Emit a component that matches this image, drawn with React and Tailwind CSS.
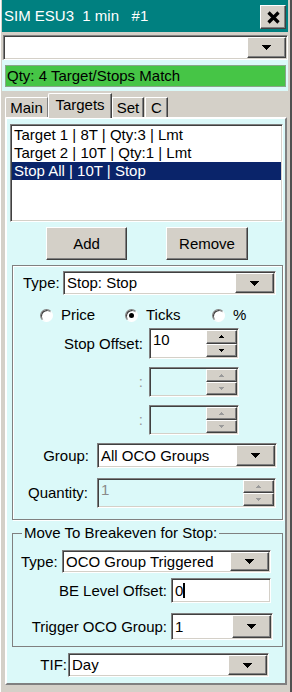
import React from 'react';

const raised =
  'bg-[#d4d0c8] border border-t-white border-l-white border-r-[#404040] border-b-[#404040] shadow-[inset_-1px_-1px_0_#808080]';
const sunken =
  'border border-t-[#808080] border-l-[#808080] border-r-white border-b-white shadow-[inset_1px_1px_0_#404040,inset_-1px_-1px_0_#d4d0c8]';

function DownArrow() {
  return (
    <svg width="9" height="5" shapeRendering="crispEdges">
      <path d="M0 0h9v1h-1v1h-1v1h-1v1h-1v1h-1v-1h-1v-1h-1v-1h-1v-1h-1z" fill="#000" />
    </svg>
  );
}

function SmallUp({ color = '#000' }) {
  return (
    <svg width="5" height="3" shapeRendering="crispEdges">
      <path d="M2 0h1v1h1v1h1v1h-5v-1h1v-1h1z" fill={color} />
    </svg>
  );
}

function SmallDown({ color = '#000' }) {
  return (
    <svg width="5" height="3" shapeRendering="crispEdges">
      <path d="M0 0h5v1h-1v1h-1v1h-1v-1h-1v-1h-1z" fill={color} />
    </svg>
  );
}

function Combo({ value, className = '' }) {
  return (
    <div className={`${sunken} bg-white flex p-[1px] ${className}`}>
      <div className="flex-1 flex items-center pl-[2px] whitespace-nowrap overflow-hidden">{value}</div>
      <div className={`${raised} w-[39px] flex items-center justify-center`}>
        <DownArrow />
      </div>
    </div>
  );
}

function Spin({ value, disabled, className = '' }) {
  const arrow = disabled ? '#9a9a9a' : '#000';
  return (
    <div className={`${sunken} ${disabled ? 'bg-[#dbf9f9]' : 'bg-white'} flex p-[1px] ${className}`}>
      <div className={`flex-1 pl-[2px] pt-[1px] ${disabled ? 'text-[#8a8a8a]' : ''}`}>{value}</div>
      <div className="w-[31px] flex flex-col">
        <div className={`${raised} flex-1 flex items-center justify-center`}>
          <SmallUp color={arrow} />
        </div>
        <div className={`${raised} flex-1 flex items-center justify-center`}>
          <SmallDown color={arrow} />
        </div>
      </div>
    </div>
  );
}

function Radio({ label, checked, className = '' }) {
  return (
    <div className={`flex items-center gap-[8px] ${className}`}>
      <div className="w-[13px] h-[13px] rounded-full bg-white border border-t-[#808080] border-l-[#808080] border-r-white border-b-white shadow-[inset_1px_1px_0_#404040] flex items-center justify-center">
        {checked && <div className="w-[5px] h-[5px] rounded-full bg-black" />}
      </div>
      <span>{label}</span>
    </div>
  );
}

function Row({ label, labelClass, children, className = '' }) {
  return (
    <div className={`flex items-center ${className}`}>
      <div className={`whitespace-nowrap ${labelClass}`}>{label}</div>
      {children}
    </div>
  );
}

export default function App() {
  const items = [
    'Target 1 | 8T | Qty:3 | Lmt',
    'Target 2 | 10T | Qty:1 | Lmt',
    'Stop All | 10T | Stop',
  ];

  return (
    <div className="w-[292px] h-[692px] flex flex-col bg-[#d4d0c8] pl-[2px] pr-[2px] border-r-2 border-r-[#505050] shadow-[inset_1px_0_0_#ffffff] font-['Liberation_Sans',Arial,sans-serif] text-[15px] leading-[18px] text-black">
      {/* title bar */}
      <div className="h-[32px] bg-[#008080] flex items-center justify-between pl-[2px] pr-[2px]">
        <span className="text-white whitespace-pre">SIM ESU3  1 min   #1</span>
        <div className={`${raised} w-[26px] h-[24px] mt-[2px] flex items-center justify-center`}>
          <svg width="13" height="13" viewBox="0 0 13 13">
            <path d="M1.5 1.5L11.5 11.5M11.5 1.5L1.5 11.5" stroke="#000" strokeWidth="3.2" />
          </svg>
        </div>
      </div>

      <div className="h-[3px]" />
      <Combo value="" className="h-[25px] ml-[1px]" />

      {/* status */}
      <div className="h-[31px] bg-[#dbf9f9] pl-[3px] pr-[2px] pt-[5px]">
        <div className="h-[22px] bg-[#46c546] border border-[#8aa58a] flex items-center pl-[1px] whitespace-nowrap">
          Qty: 4 Target/Stops Match
        </div>
      </div>

      {/* tabs */}
      <div className="h-[26px] flex items-end pl-[3px]">
        <div className="h-[20px] w-[43px] border-t border-l border-white border-r border-r-[#808080] rounded-tl-[2px] flex items-center justify-center">
          Main
        </div>
        <div className="relative -mb-[1px] h-[25px] w-[64px] bg-[#d4d0c8] border-t border-l border-white border-r border-r-[#404040] shadow-[inset_-1px_0_0_#808080] rounded-tl-[2px] flex items-start justify-center pt-[2px]">
          Targets
        </div>
        <div className="h-[20px] w-[32px] border-t border-l border-white border-r border-r-[#404040] shadow-[inset_-1px_0_0_#808080] flex items-center justify-center">
          Set
        </div>
        <div className="h-[20px] w-[23px] ml-[1px] border-t border-l border-white border-r border-r-[#404040] shadow-[inset_-1px_0_0_#808080] flex items-center justify-center">
          C
        </div>
      </div>

      {/* panel */}
      <div className="h-[568px] ml-[3px] mr-[1px] bg-[#dbf9f9] border-2 border-t-white border-l-white border-r-[#808080] border-b-[#808080] flex flex-col">
        <div className={`${sunken} bg-white h-[98px] ml-[3px] mr-[2px] mt-[5px] p-[1px]`}>
          {items.map((t, i) => (
            <div
              key={t}
              className={`h-[18px] pl-[2px] whitespace-nowrap ${i === 2 ? 'bg-[#0a246a] text-white' : ''}`}
            >
              {t}
            </div>
          ))}
        </div>

        <div className="flex mt-[5px] pl-[39px] gap-[39px]">
          <div className={`${raised} w-[81px] h-[33px] flex items-center justify-center`}>Add</div>
          <div className={`${raised} w-[82px] h-[33px] flex items-center justify-center`}>Remove</div>
        </div>

        {/* group box 1 */}
        <div className="h-[255px] ml-[5px] mr-[2px] mt-[5px] border border-[#808080] shadow-[1px_1px_0_#ffffff,inset_1px_1px_0_#ffffff] flex flex-col">
          <Row label="Type:" labelClass="w-[50px] pl-[10px]" className="mt-[5px]">
            <Combo value="Stop: Stop" className="w-[213px] h-[24px]" />
          </Row>

          <div className="flex items-center h-[18px] mt-[11px] pl-[27px]">
            <Radio label="Price" className="w-[85px]" />
            <Radio label="Ticks" checked className="w-[87px]" />
            <Radio label="%" />
          </div>

          <Row label="Stop Offset:" labelClass="w-[136px] text-right pr-[6px]" className="mt-[4px]">
            <Spin value="10" className="w-[90px] h-[31px]" />
          </Row>
          <Row label=":" labelClass="w-[136px] text-right pr-[6px] text-[#9a9a9a]" className="mt-[8px]">
            <Spin value="" disabled className="w-[90px] h-[30px]" />
          </Row>
          <Row label=":" labelClass="w-[136px] text-right pr-[6px] text-[#9a9a9a]" className="mt-[8px]">
            <Spin value="" disabled className="w-[90px] h-[30px]" />
          </Row>

          <Row label="Group:" labelClass="w-[84px] text-right pr-[8px]" className="mt-[8px]">
            <Combo value="All OCO Groups" className="w-[180px] h-[25px]" />
          </Row>
          <Row label="Quantity:" labelClass="w-[84px] text-right pr-[9px]" className="mt-[10px]">
            <Spin value="1" disabled className="w-[179px] h-[30px]" />
          </Row>
        </div>

        {/* group box 2 */}
        <fieldset className="h-[123px] ml-[5px] mr-[2px] mt-[4px] border border-[#808080] flex flex-col">
          <legend className="ml-[9px] px-[2px]">Move To Breakeven for Stop:</legend>
          <Row label="Type:" labelClass="w-[49px] pl-[8px]" className="mt-[8px]">
            <Combo value="OCO Group Triggered" className="w-[209px] h-[23px]" />
          </Row>
          <Row label="BE Level Offset:" labelClass="w-[158px] text-right pr-[4px]" className="mt-[5px]">
            <div className={`${sunken} bg-white w-[100px] h-[25px] flex items-center pl-[3px]`}>
              0<span className="inline-block w-[2px] h-[15px] bg-black" />
            </div>
          </Row>
          <Row label="Trigger OCO Group:" labelClass="w-[158px] text-right pr-[4px]" className="mt-[10px]">
            <Combo value="1" className="w-[102px] h-[27px]" />
          </Row>
        </fieldset>

        <Row label="TIF:" labelClass="w-[61px] text-right pr-[1px]" className="mt-[6px]">
          <Combo value="Day" className="w-[201px] h-[24px]" />
        </Row>
      </div>
    </div>
  );
}
